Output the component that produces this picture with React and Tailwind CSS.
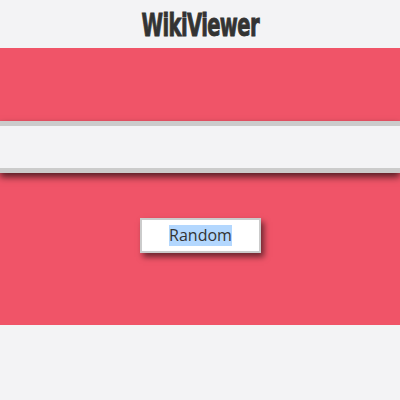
export default function App() {
  return (
    <div className="min-h-[400px] w-[400px] bg-[#f3f3f5]">
      <div className="h-[48px] flex items-center justify-center">
        <h1
          className="inline-block scale-x-[0.61] text-[32px] font-bold text-[#333333] tracking-[-1px] leading-none [-webkit-text-stroke:1px_#333333] mt-[1px]"
          style={{ fontFamily: '"DejaVu Sans", sans-serif' }}
        >
          WikiViewer
        </h1>
      </div>
      <div className="h-[73px] bg-[#f05468]" />
      <div className="relative z-10 h-[52px] border-y-[5px] border-[#cbcbcb] bg-[#f3f3f5] shadow-[0_4px_7px_rgba(0,0,0,0.65)]" />
      <div className="h-[152px] bg-[#f05468] pt-[45px] flex justify-center">
        <div className="ml-[1px] h-[35px] w-[121px] border-2 border-[#cbcbcb] bg-white shadow-[3px_4px_6px_rgba(0,0,0,0.55)] flex items-center justify-center">
          <span
            className="bg-[#b3d7fe] text-[16px] text-[#333333] leading-[21px]"
            style={{ fontFamily: '"Open Sans", sans-serif' }}
          >
            Random
          </span>
        </div>
      </div>
    </div>
  );
}
